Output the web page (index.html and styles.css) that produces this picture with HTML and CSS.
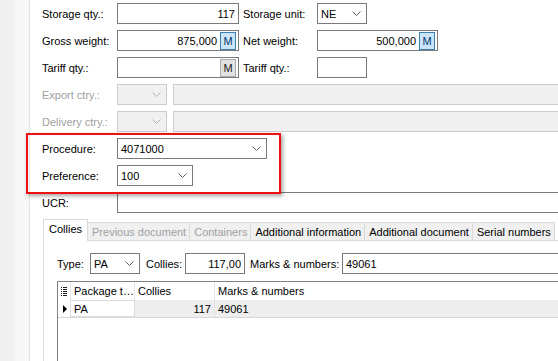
FILE: index.html
```html
<!DOCTYPE html>
<html>
<head>
    <meta charset="UTF-8">
    <title>Item details</title>
    <link rel="stylesheet" href="styles.css">
</head>
<body>
    <div class="window">
        <div class="rail"></div>
        <div class="gutter"></div>
        <div class="form">
            <div class="row">
                <span class="lbl">Storage qty.:</span>
                <div class="field num w122">117</div>
                <span class="lbl2">Storage unit:</span>
                <div class="field combo w50"><span class="val">NE</span><svg class="chev" width="9" height="5" viewBox="0 0 9 5"><polyline points="0.5,0.5 4.5,4.5 8.5,0.5"/></svg></div>
            </div>
            <div class="row">
                <span class="lbl">Gross weight:</span>
                <div class="field num with-btn w122"><span class="val">875,000</span><span class="mbtn hot">M</span></div>
                <span class="lbl2">Net weight:</span>
                <div class="field num with-btn w121"><span class="val">500,000</span><span class="mbtn hot">M</span></div>
            </div>
            <div class="row">
                <span class="lbl">Tariff qty.:</span>
                <div class="field num with-btn w122"><span class="val"></span><span class="mbtn">M</span></div>
                <span class="lbl2">Tariff qty.:</span>
                <div class="field w50"></div>
            </div>
            <div class="row disabled">
                <span class="lbl">Export ctry.:</span>
                <div class="field combo w50"><span class="val"></span><svg class="chev" width="9" height="5" viewBox="0 0 9 5"><polyline points="0.5,0.5 4.5,4.5 8.5,0.5"/></svg></div>
                <div class="field wide"></div>
            </div>
            <div class="row disabled">
                <span class="lbl">Delivery ctry.:</span>
                <div class="field combo w50"><span class="val"></span><svg class="chev" width="9" height="5" viewBox="0 0 9 5"><polyline points="0.5,0.5 4.5,4.5 8.5,0.5"/></svg></div>
                <div class="field wide"></div>
            </div>
            <div class="row">
                <span class="lbl">Procedure:</span>
                <div class="field combo w150"><span class="val">4071000</span><svg class="chev" width="9" height="5" viewBox="0 0 9 5"><polyline points="0.5,0.5 4.5,4.5 8.5,0.5"/></svg></div>
            </div>
            <div class="row">
                <span class="lbl">Preference:</span>
                <div class="field combo w76"><span class="val">100</span><svg class="chev" width="9" height="5" viewBox="0 0 9 5"><polyline points="0.5,0.5 4.5,4.5 8.5,0.5"/></svg></div>
            </div>
            <div class="row">
                <span class="lbl">UCR:</span>
                <div class="field grow"></div>
            </div>

            <div class="tabctl">
                <div class="tabstrip">
                    <span class="tab active">Collies</span>
                    <span class="tab off">Previous document</span>
                    <span class="tab off">Containers</span>
                    <span class="tab">Additional information</span>
                    <span class="tab">Additional document</span>
                    <span class="tab">Serial numbers</span>
                </div>
                <div class="tabpage">
                    <div class="row">
                        <span class="lbl-type">Type:</span>
                        <div class="field combo w50"><span class="val">PA</span><svg class="chev" width="9" height="5" viewBox="0 0 9 5"><polyline points="0.5,0.5 4.5,4.5 8.5,0.5"/></svg></div>
                        <span class="lbl-collies">Collies:</span>
                        <div class="field num w60">117,00</div>
                        <span class="lbl-marks">Marks &amp; numbers:</span>
                        <div class="field grow">49061</div>
                    </div>
                    <div class="grid">
                        <div class="grid-row head">
                            <div class="ind"><svg width="6" height="9" viewBox="0 0 6 9"><path d="M0 0.5h1M2 0.5h4M0 2.5h1M2 2.5h4M0 4.5h1M2 4.5h4M0 6.5h1M2 6.5h4M0 8.5h1M2 8.5h4"/></svg></div>
                            <div class="cell c1">Package t…</div>
                            <div class="cell c2">Collies</div>
                            <div class="cell c3">Marks &amp; numbers</div>
                        </div>
                        <div class="grid-row data">
                            <div class="ind"><span class="arrow"></span></div>
                            <div class="cell c1 focus">PA</div>
                            <div class="cell c2 num">117</div>
                            <div class="cell c3">49061</div>
                        </div>
                    </div>
                </div>
            </div>
        </div>
    </div>
    <div class="highlight"></div>
</body>
</html>
```

FILE: styles.css
```css
* {
    margin: 0;
    padding: 0;
    box-sizing: border-box;
}

body {
    font-family: 'Liberation Sans', Arial, sans-serif;
    font-size: 11px;
    color: #000;
    background: #fff;
    width: 558px;
    height: 361px;
    overflow: hidden;
    position: relative;
}

.window {
    display: flex;
    width: 640px;
    height: 361px;
}

.rail {
    width: 15px;
    background-color: #f0f0f0;
}

.gutter {
    width: 15px;
    background-color: #f7f7f7;
    border-right: 1px solid #e3e3e3;
}

.form {
    flex: 1;
    padding: 3px 0 0 12px;
    display: flex;
    flex-direction: column;
    gap: 6px;
}

.row {
    display: flex;
    align-items: center;
    height: 21px;
    flex-shrink: 0;
}

.lbl {
    width: 75px;
}

.lbl2 {
    width: 74px;
    margin-left: 4px;
}

.disabled .lbl {
    color: #a0a0a0;
}

.field {
    height: 21px;
    border: 1px solid #7a7a7a;
    background-color: #fff;
    display: flex;
    align-items: center;
    padding: 0 3px;
    white-space: nowrap;
}

.disabled .field {
    border-color: #cccccc;
    background-color: #f0f0f0;
}

.num {
    justify-content: flex-end;
}

.w50 { width: 50px; }
.w60 { width: 60px; }
.w76 { width: 76px; }
.w121 { width: 121px; }
.w122 { width: 122px; }
.w150 { width: 150px; }

.wide {
    flex: 1;
    margin-left: 6px;
}

.grow {
    flex: 1;
}

.combo .val {
    flex: 1;
}

.chev {
    margin-right: 2px;
    fill: none;
    stroke: #606060;
    stroke-width: 1;
}

.disabled .chev {
    stroke: #b4b4b4;
}

.with-btn {
    padding-right: 1px;
}

.with-btn .val {
    flex: 1;
    text-align: right;
}

.mbtn {
    width: 16px;
    height: 18px;
    margin-left: 3px;
    margin-right: 1px;
    border: 1px solid #adadad;
    background-color: #e1e1e1;
    display: flex;
    align-items: center;
    justify-content: center;
    font-size: 11px;
    color: #222;
}

.mbtn.hot {
    border-color: #3c7fb1;
    background-color: #cce4f7;
    color: #003c74;
}

/* tabs */
.tabctl {
    margin-left: 1px;
    flex: 1;
    display: flex;
    flex-direction: column;
}

.tabstrip {
    display: flex;
    align-items: flex-end;
    height: 21px;
    position: relative;
    z-index: 1;
}

.tab {
    height: 18px;
    padding: 0 3px 0 4px;
    border: 1px solid #dadada;
    border-left: none;
    border-bottom: none;
    background-color: #f0f0f0;
    display: flex;
    align-items: center;
    white-space: nowrap;
}

.tab.active {
    height: 22px;
    margin-bottom: -1px;
    border-left: 1px solid #dadada;
    background-color: #fff;
    padding: 0 5px 3px 5px;
}

.tab.off {
    color: #a0a0a0;
}

.tabpage {
    flex: 1;
    border: 1px solid #dadada;
    border-right: none;
    border-bottom: none;
    background-color: #fff;
    padding: 12px 0 0 13px;
    display: flex;
    flex-direction: column;
}

.lbl-type {
    width: 33px;
}

.lbl-collies {
    width: 39px;
    margin-left: 6px;
}

.lbl-marks {
    width: 92px;
    margin-left: 5px;
}

/* grid */
.grid {
    flex: 1;
    margin-top: 7px;
    border-left: 1px solid #828282;
    border-top: 1px solid #828282;
}

.grid-row {
    display: flex;
    height: 18px;
}

.grid-row.head {
    height: 18px;
    background-color: #fff;
}

.grid-row.data {
    height: 18px;
    border-bottom: 1px solid #d8d8d8;
    background-color: #eeeeee;
}

.ind {
    width: 12px;
    background-color: #fff;
    display: flex;
    align-items: center;
    justify-content: center;
}

.ind path {
    stroke: #222;
    stroke-width: 1;
}

.arrow {
    width: 0;
    height: 0;
    border-top: 4px solid transparent;
    border-bottom: 4px solid transparent;
    border-left: 4px solid #000;
    margin-left: 1px;
}

.cell {
    display: flex;
    align-items: center;
    padding: 0 3px;
    white-space: nowrap;
}

.c1 {
    width: 65px;
    border-left: 1px solid #e3e3e3;
    border-right: 1px solid #e3e3e3;
}

.c2 {
    width: 80px;
    border-right: 1px solid #e3e3e3;
}

.c3 {
    flex: 1;
}

.c2.num {
    justify-content: flex-end;
}

.c1.focus {
    background-color: #fff;
    border: 1px solid #dcdcdc;
}

/* annotation around procedure/preference */
.highlight {
    position: absolute;
    left: 26px;
    top: 133px;
    width: 255px;
    height: 61px;
    border: 2px solid #ee1111;
    box-shadow: 2px 2px 4px rgba(0, 0, 0, 0.35);
}
```
